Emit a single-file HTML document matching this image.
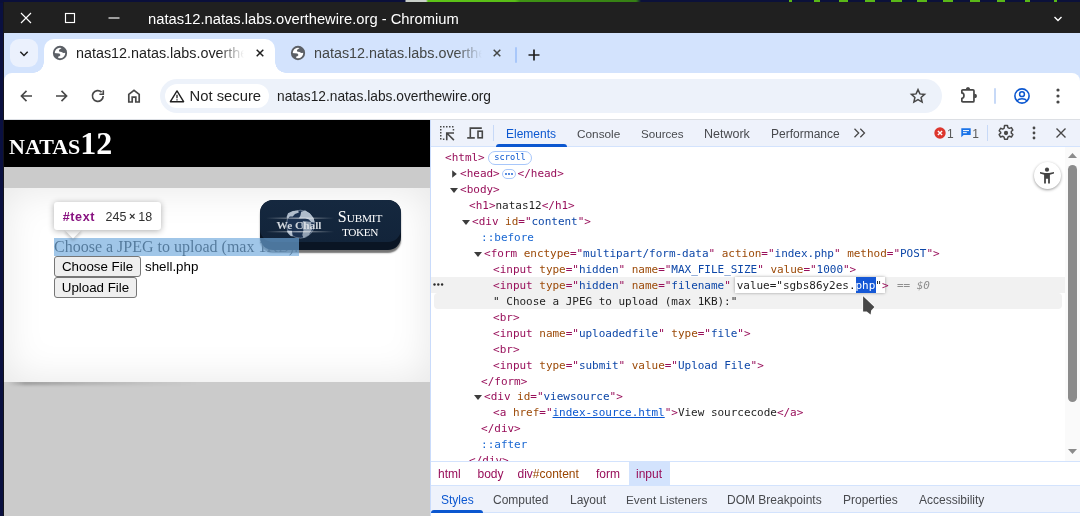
<!DOCTYPE html>
<html><head><meta charset="utf-8"><title>natas12</title>
<style>
*{box-sizing:border-box;margin:0;padding:0}
html,body{width:1080px;height:516px;overflow:hidden}
body{position:relative;opacity:.999;background:#0a1040;font-family:"Liberation Sans","DejaVu Sans",sans-serif;}
.abs{position:absolute}
svg{position:absolute;overflow:visible}
/* desktop */
#desk{left:0;top:0;width:1080px;height:3px;background:linear-gradient(90deg,#0a0f3a 0,#0a0f3a 405px,#c9cfc9 406px,#c9cfc9 426px,#5ec418 428px,#58bd16 515px,#3f9414 520px,#357f14 636px,#0b113a 641px,#0b113a 100%)}
/* window */
#win{left:4px;top:2px;width:1076px;height:514px;background:#fff;overflow:hidden}
#title{left:0;top:0;width:1076px;height:31px;background:#202020;color:#fff}
#title .t{left:144px;top:6.800px;font-size:14.75px;line-height:20px;white-space:pre}
#tabs{left:0;top:31px;width:1076px;height:54px;background:#d3e3fd}
#toolbar{left:0;top:71px;width:1076px;height:46px;background:#fff;border-radius:8px 8px 0 0}
#tbline{left:0;top:117px;width:1076px;height:1px;background:#dcdfe4}

/* tabs */
#tsearch{left:6px;top:6px;width:28px;height:28px;border-radius:9px;background:#ebf1fd}
#tab1{left:40px;top:6px;width:231px;height:34px;background:#fff;border-radius:10px 10px 0 0}
#tab1:before,#tab1:after{content:"";position:absolute;bottom:0;width:11px;height:11px;background:radial-gradient(circle at 0 0,rgba(255,255,255,0) 10.500px,#fff 11px)}
#tab1:before{left:-11px}
#tab1:after{right:-11px;transform:scaleX(-1)}
.ttl{font-size:14.350px;line-height:20px;color:#1f1f1f;white-space:pre;overflow:hidden}
.fade1{background:linear-gradient(90deg,rgba(255,255,255,0),#fff)}
.fade2{background:linear-gradient(90deg,rgba(211,227,253,0),#d3e3fd)}
#omni{left:156px;top:6px;width:782px;height:34px;border-radius:17px;background:#edf2fa}
#chip{left:5px;top:5px;width:104px;height:24px;border-radius:12px;background:#fff}
.ot{font-size:14.8px;line-height:20px;color:#1f1f1f;white-space:pre}

/* page */
#page{left:0;top:118px;width:426px;height:396px;background:#cbcbcb;overflow:hidden;font-family:"Liberation Serif","DejaVu Serif",serif}
#h1{left:0;top:0;width:426px;height:47px;background:#000;color:#fff;font-weight:bold;font-size:32px;line-height:37px;padding:5px 0 0 5px;font-variant:small-caps;white-space:pre}
#content{left:0;top:67.500px;width:426px;height:194.300px;background:#fff;box-shadow:inset 0 0 40px rgba(0,0,0,.10)}
#curl{left:4px;top:260.500px;width:190px;height:4.500px;background:linear-gradient(90deg,rgba(0,0,0,0),rgba(0,0,0,.24) 9%,rgba(0,0,0,.13) 40%,rgba(0,0,0,.04) 75%,rgba(0,0,0,0));filter:blur(1.500px)}
#hl{left:50px;top:118px;width:245px;height:18px;background:rgba(111,168,220,.66)}
#ptxt{left:50px;top:118px;font-size:16px;line-height:18px;color:#1e1e1e;white-space:pre}
.btn{font-family:"Liberation Sans",sans-serif;font-size:13.33px;line-height:15px;color:#000;background:#efefef;border:1px solid #767676;border-radius:3px;text-align:center;white-space:pre;padding-top:2px}
#tip{left:50px;top:82px;width:107px;height:28px;background:#fff;border-radius:3px;box-shadow:0 1px 6px rgba(0,0,0,.32);font-family:"Liberation Sans",sans-serif}
#tiparrow{left:63px;top:104px;width:12px;height:12px;background:#fff;transform:rotate(45deg);box-shadow:2px 2px 3px rgba(0,0,0,.18)}
#wc{left:255.5px;top:80px;width:141px;height:50px;border-radius:13px;background:#0a1524;box-shadow:0 3px 1.5px rgba(70,70,70,.75)}
#wcf{left:0;top:0;width:141px;height:42px;border-radius:13px;background:linear-gradient(180deg,#15283f,#12243a)}

/* devtools */
#divd{left:426px;top:118px;width:1px;height:396px;background:#c9dbfb}
#dt{left:427px;top:118px;width:649px;height:396px;background:#fff;overflow:hidden;color:#1f1f1f}
#dtb{left:0;top:0;width:649px;height:27px;background:#eef2fb;border-bottom:1px solid #d3e3fd}
.tabl{font-size:12px;line-height:16px;color:#484a4e;white-space:pre;top:5.5px}
#tree{left:0;top:27px;width:634px;height:314.5px;overflow:hidden;font-family:"DejaVu Sans Mono","Liberation Mono",monospace;font-size:11px;line-height:16px;letter-spacing:-.023px;white-space:pre;color:#1f1f1f}
.r{position:absolute;height:16px}
.tg{color:#980f5a}.n{color:#9c4a08}.v{color:#0d47a8}.ps{color:#1967d2}
.ar{position:absolute;width:0;height:0}
.ar.d{border-left:3.5px solid transparent;border-right:3.5px solid transparent;border-top:4.5px solid #474747}
.ar.rt{border-top:3.5px solid transparent;border-bottom:3.5px solid transparent;border-left:4.5px solid #474747}
#sb{left:634px;top:27px;width:15px;height:314.5px;background:#fafafa}
#bc{left:0;top:341px;width:649px;height:24px;background:#fff;border-top:1px solid #d3e3fd;font-size:12px;line-height:16px;white-space:pre}
#bc span{position:absolute;top:3.500px;color:#980f5a}
#st{left:0;top:365px;width:649px;height:28px;background:#eef2fb;border-top:1px solid #d3e3fd;border-bottom:1px solid #d3e3fd}
</style></head><body>
<div id="desk" class="abs"><div class="abs" style="left:788.5px;top:0;width:3px;height:2px;background:#5ab818"></div><div class="abs" style="left:814px;top:0;width:6px;height:2px;background:#5ab818"></div><div class="abs" style="left:838.5px;top:0;width:9px;height:2px;background:#5ab818"></div><div class="abs" style="left:865px;top:0;width:10px;height:2px;background:#5ab818"></div><div class="abs" style="left:890.5px;top:0;width:11px;height:2px;background:#5ab818"></div><div class="abs" style="left:917px;top:0;width:10px;height:2px;background:#5ab818"></div><div class="abs" style="left:943px;top:0;width:10px;height:2px;background:#5ab818"></div><div class="abs" style="left:970px;top:0;width:10px;height:2px;background:#5ab818"></div><div class="abs" style="left:997px;top:0;width:8px;height:2px;background:#5ab818"></div><div class="abs" style="left:1024.5px;top:0;width:5px;height:2px;background:#5ab818"></div><div class="abs" style="left:1053.5px;top:0;width:3px;height:2px;background:#5ab818"></div></div>
<div class="abs" style="left:3px;top:2px;width:1px;height:514px;background:#15151b"></div>
<div id="win" class="abs">
 <div id="title" class="abs">
  <svg width="12" height="12" style="left:16px;top:10px" viewBox="0 0 12 12"><path d="M1 1L11 11M11 1L1 11" stroke="#fff" stroke-width="1.150" fill="none"/></svg>
  <svg width="12" height="12" style="left:60px;top:10px" viewBox="0 0 12 12"><rect x="1.500" y="1.500" width="9" height="9" stroke="#fff" stroke-width="1.150" fill="none"/></svg>
  <svg width="12" height="12" style="left:104px;top:10px" viewBox="0 0 12 12"><path d="M0.500 6H11.500" stroke="#fff" stroke-width="1.150" fill="none"/></svg>
  <div class="abs t">natas12.natas.labs.overthewire.org - Chromium</div>
  <svg width="10" height="6" style="left:1049px;top:14px" viewBox="0 0 10 6"><path d="M1.500 1L5 4.500L8.500 1" stroke="#fff" stroke-width="1.400" fill="none"/></svg>
 </div>
 <div id="tabs" class="abs">
  <div id="tsearch" class="abs"></div>
  <svg width="10" height="6" style="left:15px;top:18px" viewBox="0 0 10 6"><path d="M1.3 0.8L5 4.5L8.7 0.8" stroke="#1f1f1f" stroke-width="1.5" fill="none"/></svg>
  <div id="tab1" class="abs"></div>
  <svg width="16" height="16" style="left:48px;top:12px" viewBox="0 0 16 16"><circle cx="8" cy="8" r="6.200" stroke="#5c6066" stroke-width="1.900" fill="#fff"/><path d="M6.900 5L9.300 3.300L11.300 2L14.300 5L14.600 7.700L11.400 8.100L9.500 7.100L7.100 6.600Z" fill="#5c6066"/><path d="M1.800 8L7.400 8.500L8.500 10L7.400 11.200L6.300 11.600L6.100 14.200L2.800 12Z" fill="#5c6066"/></svg>
  <div class="abs ttl" style="left:72px;top:10px;width:167.500px">natas12.natas.labs.overthewire.org</div>
  <div class="abs fade1" style="left:213.500px;top:10px;width:26px;height:22px"></div>
  <svg width="10" height="10" style="left:251px;top:15.300px" viewBox="0 0 10 10"><path d="M1.700 1.700L8.300 8.300M8.300 1.700L1.700 8.300" stroke="#1f1f1f" stroke-width="1.500" fill="none"/></svg>
  <svg width="16" height="16" style="left:286px;top:12px" viewBox="0 0 16 16"><circle cx="8" cy="8" r="6.200" stroke="#5c6066" stroke-width="1.900" fill="#fff"/><path d="M6.900 5L9.300 3.300L11.300 2L14.300 5L14.600 7.700L11.400 8.100L9.500 7.100L7.100 6.600Z" fill="#5c6066"/><path d="M1.800 8L7.400 8.500L8.500 10L7.400 11.200L6.300 11.600L6.100 14.200L2.800 12Z" fill="#5c6066"/></svg>
  <div class="abs ttl" style="left:310px;top:10px;width:167.500px;color:#444746">natas12.natas.labs.overthewire.org</div>
  <div class="abs fade2" style="left:451.500px;top:10px;width:26px;height:22px"></div>
  <svg width="10" height="10" style="left:488.300px;top:15.300px" viewBox="0 0 10 10"><path d="M1.700 1.700L8.300 8.300M8.300 1.700L1.700 8.300" stroke="#444746" stroke-width="1.500" fill="none"/></svg>
  <div class="abs" style="left:511px;top:14px;width:2px;height:16px;background:#a8c7fa;border-radius:1px"></div>
  <svg width="12" height="12" style="left:524px;top:16px" viewBox="0 0 12 12"><path d="M6 0.5V11.5M0.5 6H11.5" stroke="#1f1f1f" stroke-width="1.7" fill="none"/></svg>
 </div>
 <div id="toolbar" class="abs">
  <svg width="16" height="16" style="left:14px;top:15px" viewBox="0 0 16 16"><path d="M14 8H4M8.500 2.900L3.400 8L8.500 13.100" stroke="#474747" stroke-width="1.600" fill="none"/></svg>
  <svg width="16" height="16" style="left:50px;top:15px" viewBox="0 0 16 16"><path d="M2 8H12M7.500 2.900L12.600 8L7.500 13.100" stroke="#474747" stroke-width="1.600" fill="none"/></svg>
  <svg width="16" height="16" style="left:86px;top:15px" viewBox="0 0 16 16"><path d="M13.2 8A5.4 5.4 0 1 1 11.6 4.1" stroke="#474747" stroke-width="1.7" fill="none"/><path d="M13.300 2.300V6.200H9.400" stroke="#474747" stroke-width="1.600" fill="none"/></svg>
  <svg width="16" height="16" style="left:122px;top:15px" viewBox="0 0 16 16"><path d="M2.8 14V6.3L8 2.3L13.2 6.3V14H9.8V9.2H6.2V14Z" stroke="#474747" stroke-width="1.7" fill="none" stroke-linejoin="miter"/></svg>
  <div id="omni" class="abs">
   <div id="chip" class="abs"></div>
   <svg width="16" height="14" style="left:9px;top:10px" viewBox="0 0 16 14"><path d="M8 1.900L14.600 12.700H1.400Z" stroke="#1f1f1f" stroke-width="1.400" fill="none" stroke-linejoin="round"/><path d="M8 5.800V9.200M8 10.200V11.500" stroke="#1f1f1f" stroke-width="1.300"/></svg>
   <div class="abs ot" style="left:29.5px;top:7px">Not secure</div>
   <div class="abs ot" style="left:117px;top:7.700px;font-size:13.750px">natas12.natas.labs.overthewire.org</div>
   <svg width="18" height="18" style="left:749px;top:7.800px" viewBox="0 0 18 18"><path d="M9 2.600L10.900 6.900L15.600 7.400L12.100 10.500L13.100 15.100L9 12.700L4.900 15.100L5.900 10.500L2.400 7.400L7.100 6.900Z" stroke="#474747" stroke-width="1.500" fill="none" stroke-linejoin="miter"/></svg>
  </div>
  <svg width="18" height="18" style="left:955px;top:14px" viewBox="0 0 18 18"><path d="M2.850 5.900V3.850Q2.850 2.850 3.850 2.850H13.950Q14.950 2.850 14.950 3.850V13.950Q14.950 14.950 13.950 14.950H3.850Q2.850 14.950 2.850 13.950V11.300A2.100 2.700 0 0 0 2.850 5.900Z" stroke="#474747" stroke-width="1.700" fill="none" stroke-linejoin="round"/><path d="M6.800 2.600A2.200 2.500 0 0 1 11.200 2.600ZM15.200 6.700A2.700 2.200 0 0 1 15.200 11.100Z" fill="#474747"/></svg>
  <div class="abs" style="left:990px;top:15px;width:2px;height:16px;background:#c7d9f7;border-radius:1px"></div>
  <svg width="18" height="18" style="left:1009px;top:14px" viewBox="0 0 18 18"><circle cx="9" cy="9" r="7.100" stroke="#0b57d0" stroke-width="1.600" fill="none"/><circle cx="9" cy="7.2" r="2.4" stroke="#0b57d0" stroke-width="1.5" fill="none"/><path d="M4 13.900C5.200 12.400 7 11.800 9 11.800C11 11.800 12.800 12.400 14 13.900" stroke="#0b57d0" stroke-width="1.5" fill="none"/></svg>
  <svg width="4" height="16" style="left:1052px;top:15px" viewBox="0 0 4 16"><circle cx="2" cy="2" r="1.6" fill="#474747"/><circle cx="2" cy="8" r="1.6" fill="#474747"/><circle cx="2" cy="14" r="1.6" fill="#474747"/></svg>
 </div>
 <div id="tbline" class="abs"></div>
<div id="page" class="abs">
  <div id="h1" class="abs">natas12</div>
  <div id="curl" class="abs"></div>
  <div id="content" class="abs"></div>
  <div id="ptxt" class="abs">Choose a JPEG to upload (max 1KB):</div>
  <div id="wc" class="abs"><div id="wcf" class="abs"></div>
   <svg width="142" height="51" viewBox="0 0 142 51" style="left:0;top:0">
    <defs><radialGradient id="gl" cx="0.4" cy="0.35" r="0.7"><stop offset="0" stop-color="#c9d6e6"/><stop offset="1" stop-color="#5d7896"/></radialGradient>
    <linearGradient id="fl" x1="0" x2="1"><stop offset="0" stop-color="#fff" stop-opacity="0"/><stop offset=".5" stop-color="#fff" stop-opacity=".55"/><stop offset="1" stop-color="#fff" stop-opacity="0"/></linearGradient></defs>
    <circle cx="40.400" cy="24.200" r="14" fill="#1b3150" stroke="#aebccc" stroke-width=".7" stroke-opacity=".7"/>
    <g fill="#bcc8d6" opacity=".92"><path d="M26.500 17.200L28 13.300L32.700 11L38.100 10.600L38.900 12.500L35 14.100L32.700 16.400L29.600 16.400L28 18.300Z"/><path d="M41.200 11.800L45.100 10.600L49.700 13.300L53.600 18L54.700 22.600L51.300 22.200L48.900 19.500L45.100 18.300L38.900 18.300L40.400 15.600Z"/><path d="M43.100 21L51 22L52 29.600L48.900 35L43.500 38.100L42.300 35L43.500 30L41 25Z" opacity=".8"/><path d="M26.800 30.400L31.900 30.700L32.700 36.600L30.300 35.800L27.600 32.700Z"/></g>
    <rect x="6" y="17.5" width="68" height="1.4" fill="url(#fl)"/>
    <rect x="6" y="31" width="68" height="1.4" fill="url(#fl)"/>
    <text x="16.600" y="28.500" font-family="Liberation Serif, serif" font-weight="bold" font-size="11.300" fill="#e3e7ec" opacity=".9">We Chall</text>
    <text x="77.800" y="21.600" font-family="Liberation Serif, serif" font-size="16" fill="#fff">S</text>
    <text x="86.800" y="21.600" font-family="Liberation Serif, serif" font-size="11.300" fill="#fff" textLength="35.500">UBMIT</text>
    <text x="82" y="35.700" font-family="Liberation Serif, serif" font-size="11.300" fill="#fff" textLength="36.500">TOKEN</text>
   </svg>
  </div>
  <div id="hl" class="abs"></div>
  <div class="abs btn" style="left:50px;top:136px;width:87px;height:21px">Choose File</div>
  <div class="abs" style="left:141px;top:139px;font-family:'Liberation Sans',sans-serif;font-size:13.33px;line-height:15px;color:#000">shell.php</div>
  <div class="abs btn" style="left:50px;top:157px;width:83px;height:21px">Upload File</div>
  <div id="tiparrow" class="abs"></div>
  <div id="tip" class="abs"><span class="abs" style="left:8.800px;top:8px;font-size:12.600px;letter-spacing:.55px;line-height:14px;font-weight:bold;color:#881280">#text</span><span class="abs" style="left:51.500px;top:8px;font-size:12.500px;line-height:14px;color:#303030;white-space:pre">245<span style="display:inline-block;width:11.900px;text-align:center;font-size:11px;font-weight:bold;position:relative;top:-1.200px;line-height:10px">×</span>18</span></div>
 </div>
<div id="divd" class="abs"></div>
 <div id="dt" class="abs">
  <div id="dtb" class="abs">
   <svg width="16" height="16" style="left:8px;top:5px" viewBox="0 0 16 16"><path d="M1 1.850H15.200M1.750 3.900V15M14.450 3.900V6.500M3.900 14.250H5.600" stroke="#474747" stroke-width="1.500" fill="none" stroke-dasharray="1.500 1.500"/><path d="M7.750 15.200V7.950H15M8 8.200L14.900 15.100" stroke="#474747" stroke-width="1.600" fill="none"/></svg>
   <svg width="18" height="16" style="left:35px;top:5px" viewBox="0 0 18 16"><path d="M4.300 12.200V3.100H15.800" stroke="#474747" stroke-width="1.600" fill="none"/><path d="M1.200 12.900H8.800" stroke="#474747" stroke-width="1.700"/><rect x="12" y="6.200" width="4.300" height="6.600" stroke="#474747" stroke-width="1.600" fill="none"/></svg>
   <div class="abs" style="left:61.500px;top:5px;width:1px;height:16px;background:#c7d9f7"></div>
   <div class="abs tabl" style="left:75px;color:#0b57d0">Elements</div><div class="abs tabl" style="left:146px;font-size:11.800px">Console</div><div class="abs tabl" style="left:210px;font-size:11.600px">Sources</div><div class="abs tabl" style="left:273px;font-size:12.500px">Network</div><div class="abs tabl" style="left:340px">Performance</div>
   <div class="abs" style="left:64.500px;top:24px;width:71px;height:3px;background:#0b57d0;border-radius:3px 3px 0 0"></div>
   <svg width="14" height="10" style="left:422.300px;top:8.200px" viewBox="0 0 14 10"><path d="M1.500 0.700L5.700 5L1.500 9.300M7.300 0.700L11.500 5L7.300 9.300" stroke="#474747" stroke-width="1.250" fill="none"/></svg>
   <svg width="12" height="12" style="left:502.500px;top:7px" viewBox="0 0 12 12"><circle cx="6" cy="6" r="5.700" fill="#dc362e"/><path d="M3.900 3.900L8.100 8.100M8.100 3.900L3.900 8.100" stroke="#fff" stroke-width="1.400"/></svg>
   <div class="abs tabl" style="left:516px;color:#5a5a5a">1</div>
   <svg width="10" height="10" style="left:529.500px;top:8.200px" viewBox="0 0 10 10"><path d="M0.300 0.300H9.700V7H2.600L0.300 9.300Z" fill="#1a73e8"/><path d="M2 2.600H8M2 4.700H5.800" stroke="#fff" stroke-width="1"/></svg>
   <div class="abs tabl" style="left:541.300px;color:#5a5a5a">1</div>
   <div class="abs" style="left:555.500px;top:5px;width:1px;height:16px;background:#c7d9f7"></div>
   <svg width="18" height="18" style="left:565.500px;top:4.300px" viewBox="0 0 16 16"><path d="M6.700 1.300h2.600l.4 1.900 1.300.7 1.800-.7 1.300 2.200-1.400 1.300v1.400l1.400 1.300-1.300 2.200-1.800-.7-1.300.7-.4 1.900H6.700l-.4-1.900-1.300-.7-1.800.7-1.300-2.200 1.400-1.300V7.300L1.900 6l1.300-2.200 1.800.7 1.300-.7z" stroke="#474747" stroke-width="1.300" fill="none" stroke-linejoin="round"/><circle cx="8" cy="8" r="1.900" fill="#474747"/></svg>
   <svg width="4" height="14" style="left:601px;top:6px" viewBox="0 0 4 14"><circle cx="2" cy="2" r="1.400" fill="#474747"/><circle cx="2" cy="7" r="1.400" fill="#474747"/><circle cx="2" cy="12" r="1.400" fill="#474747"/></svg>
   <svg width="12" height="12" style="left:624px;top:7px" viewBox="0 0 12 12"><path d="M1.500 1.500L10.500 10.500M10.500 1.500L1.500 10.500" stroke="#474747" stroke-width="1.400" fill="none"/></svg>
  </div>
  <div id="tree" class="abs">
<div class="abs" style="left:0;top:130.200px;width:634px;height:16px;background:#f1f1f1"></div>
<div class="abs" style="left:3px;top:146px;width:628px;height:16.300px;background:#f1f1f1;border-radius:4px"></div>
<div class="r" style="left:14.1px;top:3.2px"><span class="tg">&lt;html</span><span class="tg">&gt;</span></div>
<div class="abs" style="left:57.300px;top:4.300px;width:43.500px;height:13.400px;border:1px solid #a8c7fa;border-radius:7px;font-size:8.700px;line-height:11.400px;color:#0b57d0;text-align:center;letter-spacing:0">scroll</div>
<svg width="5" height="8" style="left:20.9px;top:23.1px" viewBox="0 0 5 8"><path d="M0.200 0.200V7.800L4.800 4Z" fill="#3c3c3c"/></svg>
<div class="r" style="left:29.1px;top:19.15px"><span class="tg">&lt;head</span><span class="tg">&gt;</span></div>
<div class="abs" style="left:71px;top:22px;width:13.500px;height:9.600px;border:1px solid #a8c7fa;border-radius:5px"></div><svg width="8" height="2" style="left:73.800px;top:25.800px" viewBox="0 0 8 2"><circle cx="1" cy="1" r=".9" fill="#0b57d0"/><circle cx="4" cy="1" r=".9" fill="#0b57d0"/><circle cx="7" cy="1" r=".9" fill="#0b57d0"/></svg>
<div class="r" style="left:86.6px;top:19.15px"><span class="tg">&lt;/head&gt;</span></div>
<svg width="8" height="5" style="left:19.2px;top:40.8px" viewBox="0 0 8 5"><path d="M0 0.100H8L4 4.900Z" fill="#3c3c3c"/></svg>
<div class="r" style="left:29.1px;top:35.1px"><span class="tg">&lt;body</span><span class="tg">&gt;</span></div>
<div class="r" style="left:38.1px;top:51.06px"><span class="tg">&lt;h1</span><span class="tg">&gt;</span>natas12<span class="tg">&lt;/h1&gt;</span></div>
<svg width="8" height="5" style="left:31.2px;top:72.71px" viewBox="0 0 8 5"><path d="M0 0.100H8L4 4.900Z" fill="#3c3c3c"/></svg>
<div class="r" style="left:41.1px;top:67.01px"><span class="tg">&lt;div</span><span class="tg"> </span><span class="n">id</span><span class="tg">="</span><span class="v">content</span><span class="tg">"</span><span class="tg">&gt;</span></div>
<div class="r" style="left:50.1px;top:82.96px"><span class="ps">::before</span></div>
<svg width="8" height="5" style="left:43.2px;top:104.61px" viewBox="0 0 8 5"><path d="M0 0.100H8L4 4.900Z" fill="#3c3c3c"/></svg>
<div class="r" style="left:53.1px;top:98.91px"><span class="tg">&lt;form</span><span class="tg"> </span><span class="n">enctype</span><span class="tg">="</span><span class="v">multipart/form-data</span><span class="tg">"</span><span class="tg"> </span><span class="n">action</span><span class="tg">="</span><span class="v">index.php</span><span class="tg">"</span><span class="tg"> </span><span class="n">method</span><span class="tg">="</span><span class="v">POST</span><span class="tg">"</span><span class="tg">&gt;</span></div>
<div class="r" style="left:62.1px;top:114.86px"><span class="tg">&lt;input</span><span class="tg"> </span><span class="n">type</span><span class="tg">="</span><span class="v">hidden</span><span class="tg">"</span><span class="tg"> </span><span class="n">name</span><span class="tg">="</span><span class="v">MAX_FILE_SIZE</span><span class="tg">"</span><span class="tg"> </span><span class="n">value</span><span class="tg">="</span><span class="v">1000</span><span class="tg">"</span><span class="tg">&gt;</span></div>
<svg width="11" height="3" style="left:2px;top:136.300px" viewBox="0 0 11 3"><circle cx="1.500" cy="1.500" r="1.200" fill="#2b2b2b"/><circle cx="5.300" cy="1.500" r="1.200" fill="#2b2b2b"/><circle cx="9.100" cy="1.500" r="1.200" fill="#2b2b2b"/></svg>
<div class="r" style="left:62.1px;top:130.82px"><span class="tg">&lt;input </span><span class="n">type</span><span class="tg">="</span><span class="v">hidden</span><span class="tg">" </span><span class="n">name</span><span class="tg">="</span><span class="v">filename</span><span class="tg">"</span></div>
<div class="abs" style="left:303.700px;top:130.200px;width:150.300px;height:15.700px;background:#fff;box-shadow:0 0 3px rgba(0,0,0,.35)"></div>
<div class="abs" style="left:425.100px;top:130.200px;width:19.700px;height:15.700px;background:#1558d6"></div>
<div class="r" style="left:305.7px;top:130.82px">value="sgbs86y2es.<span style="color:#fff">php</span>"</div>
<div class="r" style="left:450.9px;top:130.82px"><span class="tg">&gt;</span></div><div class="r" style="left:459.3px;top:130.82px"><span style="color:#8f8f8f;font-style:italic"> == $0</span></div>
<div class="r" style="left:62.1px;top:146.77px">" Choose a JPEG to upload (max 1KB):"</div>
<div class="r" style="left:62.1px;top:162.72px"><span class="tg">&lt;br</span><span class="tg">&gt;</span></div>
<div class="r" style="left:62.1px;top:178.67px"><span class="tg">&lt;input</span><span class="tg"> </span><span class="n">name</span><span class="tg">="</span><span class="v">uploadedfile</span><span class="tg">"</span><span class="tg"> </span><span class="n">type</span><span class="tg">="</span><span class="v">file</span><span class="tg">"</span><span class="tg">&gt;</span></div>
<div class="r" style="left:62.1px;top:194.62px"><span class="tg">&lt;br</span><span class="tg">&gt;</span></div>
<div class="r" style="left:62.1px;top:210.58px"><span class="tg">&lt;input</span><span class="tg"> </span><span class="n">type</span><span class="tg">="</span><span class="v">submit</span><span class="tg">"</span><span class="tg"> </span><span class="n">value</span><span class="tg">="</span><span class="v">Upload File</span><span class="tg">"</span><span class="tg">&gt;</span></div>
<div class="r" style="left:50.1px;top:226.53px"><span class="tg">&lt;/form&gt;</span></div>
<svg width="8" height="5" style="left:43.2px;top:248.18px" viewBox="0 0 8 5"><path d="M0 0.100H8L4 4.900Z" fill="#3c3c3c"/></svg>
<div class="r" style="left:53.1px;top:242.48px"><span class="tg">&lt;div</span><span class="tg"> </span><span class="n">id</span><span class="tg">="</span><span class="v">viewsource</span><span class="tg">"</span><span class="tg">&gt;</span></div>
<div class="r" style="left:62.1px;top:258.43px"><span class="tg">&lt;a </span><span class="n">href</span><span class="tg">="</span><span class="v" style="text-decoration:underline;color:#0b57d0">index-source.html</span><span class="tg">"&gt;</span>View sourcecode<span class="tg">&lt;/a&gt;</span></div>
<div class="r" style="left:50.1px;top:274.38px"><span class="tg">&lt;/div&gt;</span></div>
<div class="r" style="left:50.1px;top:290.34px"><span class="ps">::after</span></div>
<div class="r" style="left:38.1px;top:306.29px"><span class="tg">&lt;/div&gt;</span></div>
  </div>
  <svg width="16" height="22" style="left:430px;top:174px;z-index:5" viewBox="0 0 16 22"><path d="M2.100 2.300V17.400H5.800L9.600 20.400L10.100 16.400L13.400 13.100Z" fill="#474747" stroke="#fbfbfb" stroke-width="1.600" stroke-linejoin="round" paint-order="stroke"/></svg>
  <div class="abs" style="left:602.500px;top:42.300px;width:27px;height:27px;border-radius:50%;background:#fff;box-shadow:0 1px 3px rgba(0,0,0,.4)"></div>
  <svg width="16" height="20" style="left:608px;top:46px" viewBox="0 0 16 20"><circle cx="8" cy="3.700" r="2.100" fill="#444"/><path d="M1 5.900L6 6.900H10L15 5.900V7.600L10.900 8.700V17.600H9.100V12.700H6.900V17.600H5.100V8.700L1 7.600Z" fill="#444"/></svg>
  <div id="sb" class="abs">
   <svg width="9" height="5" style="left:3px;top:6px" viewBox="0 0 9 5"><path d="M0 5L4.500 0L9 5Z" fill="#8b8b8b"/></svg>
   <div class="abs" style="left:3px;top:18px;width:9px;height:237px;border-radius:4.500px;background:#8b8b8b"></div>
   <svg width="9" height="5" style="left:3px;top:302px" viewBox="0 0 9 5"><path d="M0 0L4.500 5L9 0Z" fill="#8b8b8b"/></svg>
  </div>
  <div id="bc" class="abs">
   <div class="abs" style="left:198px;top:0;width:40.500px;height:24px;background:#d3e3fd"></div>
   <span style="left:7px">html</span><span style="left:46.500px">body</span><span style="left:86.500px">div<span style="position:static;color:#994500">#content</span></span><span style="left:165px">form</span><span style="left:205px">input</span>
  </div>
  <div id="st" class="abs">
   <div class="abs tabl" style="left:10px;top:5.700px;color:#0b57d0">Styles</div>
   <div class="abs tabl" style="left:62px;top:5.700px">Computed</div>
   <div class="abs tabl" style="left:139px;top:5.700px">Layout</div>
   <div class="abs tabl" style="left:195px;top:5.700px;font-size:11.800px">Event Listeners</div>
   <div class="abs tabl" style="left:296px;top:5.700px">DOM Breakpoints</div>
   <div class="abs tabl" style="left:412px;top:5.700px">Properties</div>
   <div class="abs tabl" style="left:488px;top:5.700px">Accessibility</div>
   <div class="abs" style="left:0;top:23.500px;width:51.500px;height:3px;background:#0b57d0;border-radius:3px 3px 0 0"></div>
  </div>
 </div>
</div>
</body></html>
